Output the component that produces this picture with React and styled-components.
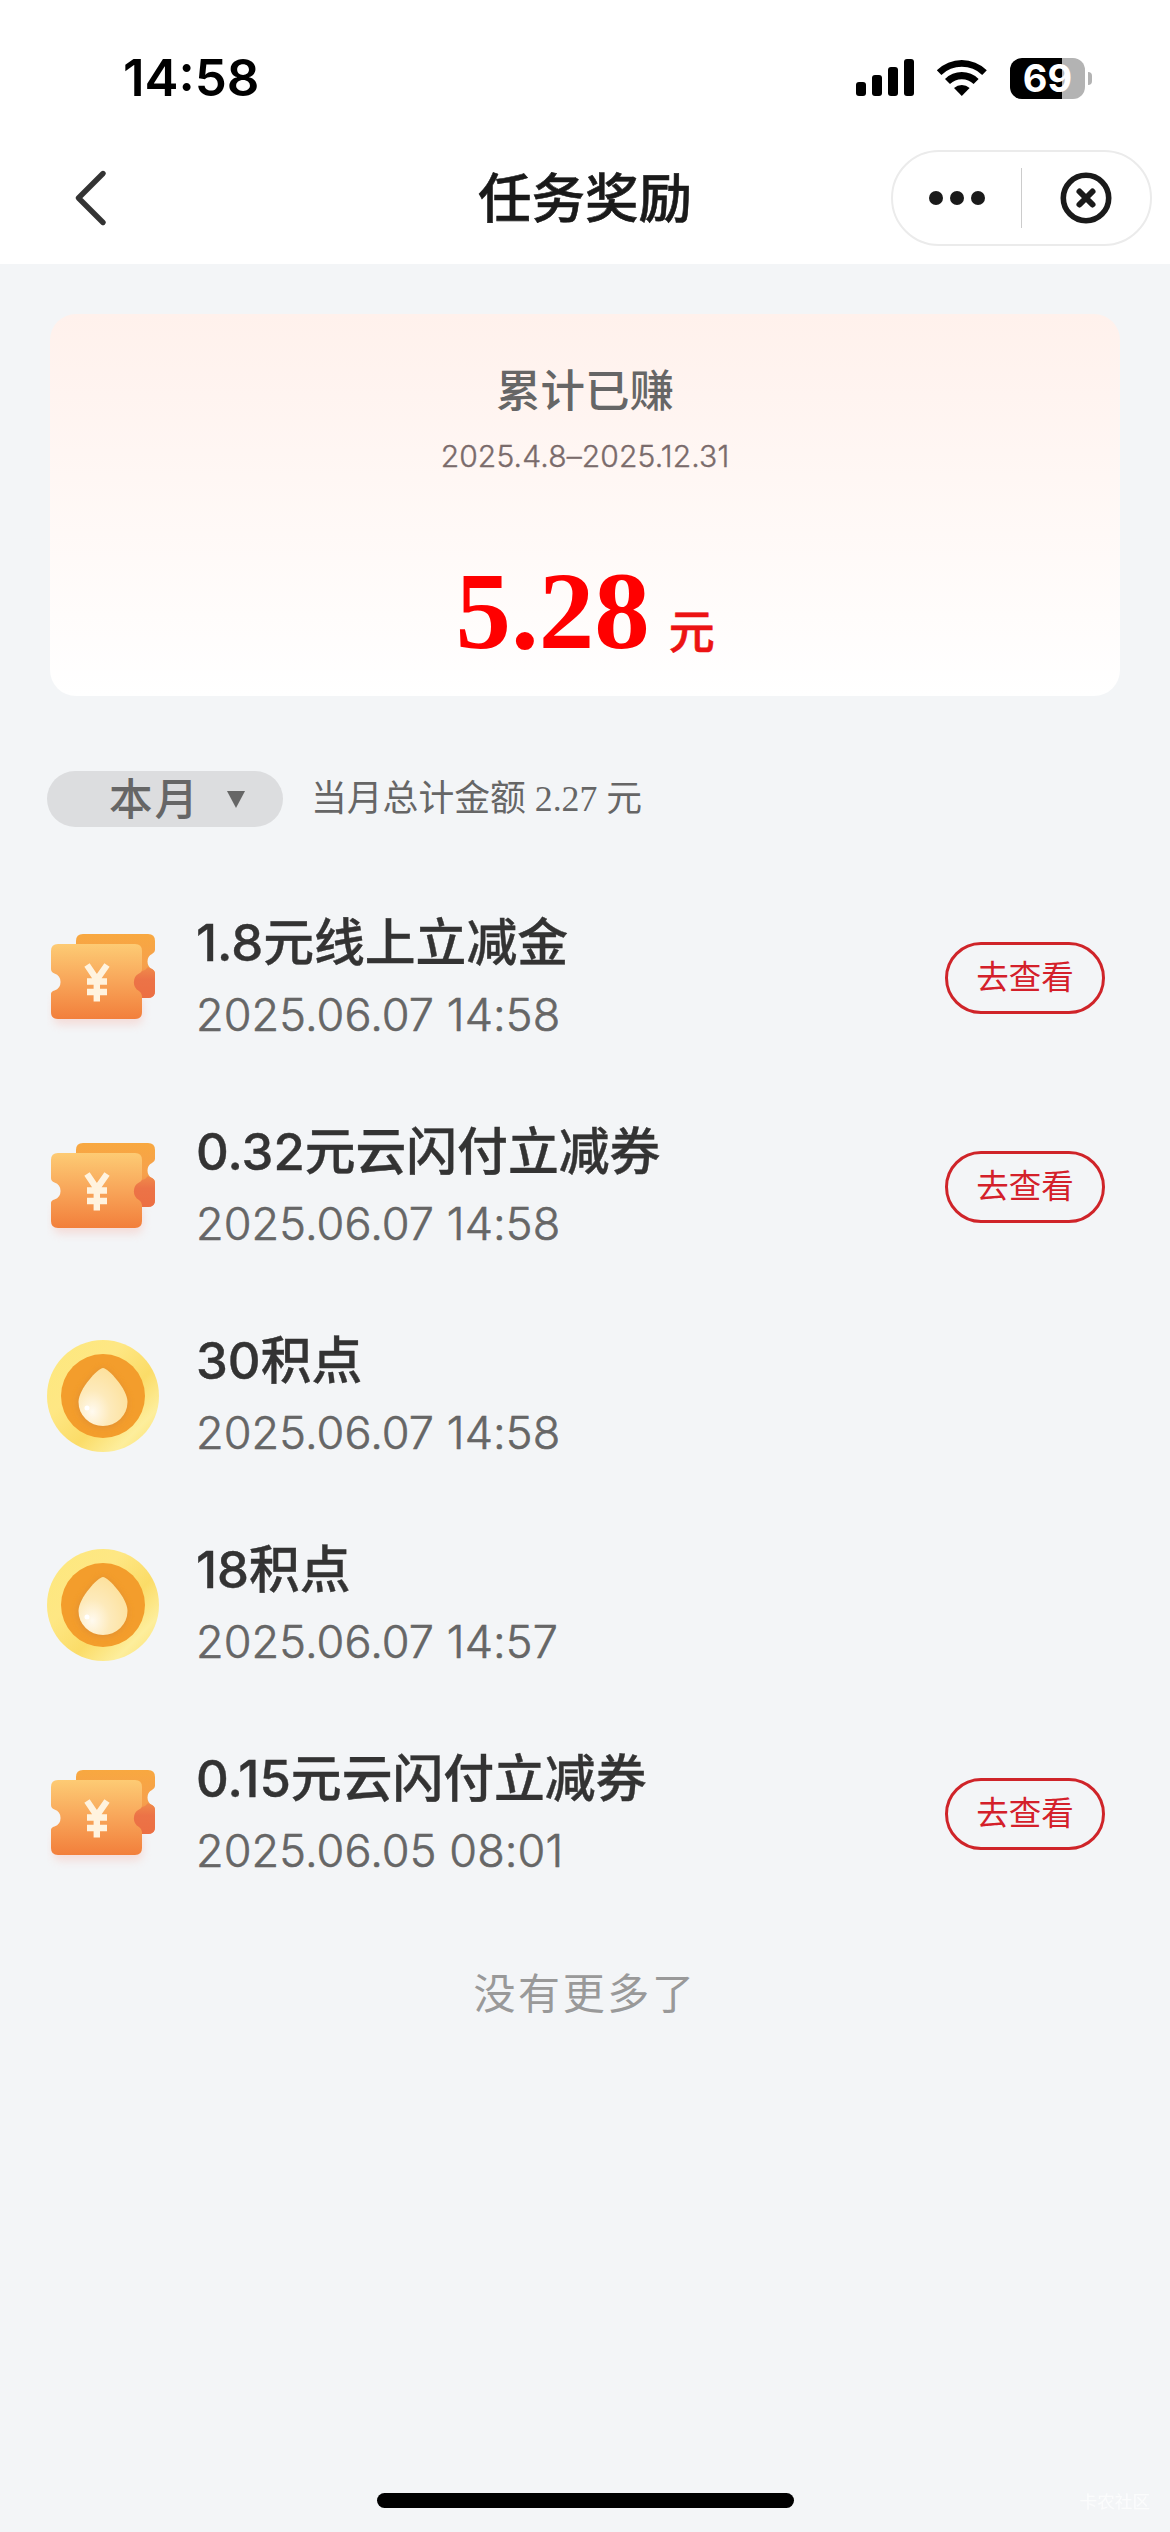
import React from 'react';
import styled, { createGlobalStyle } from 'styled-components';

const records = [
  { id: 1, type: 'coupon', title: '1.8元线上立减金', time: '2025.06.07 14:58' },
  { id: 2, type: 'coupon', title: '0.32元云闪付立减券', time: '2025.06.07 14:58' },
  { id: 3, type: 'point', title: '30积点', time: '2025.06.07 14:58' },
  { id: 4, type: 'point', title: '18积点', time: '2025.06.07 14:57' },
  { id: 5, type: 'coupon', title: '0.15元云闪付立减券', time: '2025.06.05 08:01' },
];

const SignalIcon = () => (
  <svg width="58" height="38" viewBox="0 0 58 38">
    <rect x="0" y="23" width="10" height="14" rx="3" />
    <rect x="16" y="16" width="10" height="21" rx="3" />
    <rect x="32" y="8" width="10" height="29" rx="3" />
    <rect x="48" y="0" width="10" height="37" rx="3" />
  </svg>
);

const WifiIcon = () => (
  <svg width="52" height="38" viewBox="0 0 52 38">
    <path d="M0.8 11.2 A36 36 0 0 1 50.8 11.2 L46.2 15.9 A29.4 29.4 0 0 0 5.4 15.9 Z" />
    <path d="M9 19.9 A24 24 0 0 1 42.6 19.9 L37.6 24.9 A17 17 0 0 0 14 24.9 Z" />
    <path d="M18 29 A12 12 0 0 1 33.6 29 L25.8 37 Z" />
  </svg>
);

const BackIcon = () => (
  <svg width="40" height="60" viewBox="0 0 40 60" fill="none">
    <path d="M33 5.5 L8.5 30 L33 54.5" stroke="#333" strokeWidth="5.4" strokeLinecap="round" strokeLinejoin="round" />
  </svg>
);

const MoreIcon = () => (
  <svg width="58" height="16" viewBox="0 0 58 16" fill="#1a1a1a">
    <circle cx="8" cy="8" r="7" />
    <circle cx="29" cy="8" r="7" />
    <circle cx="50" cy="8" r="7" />
  </svg>
);

const CloseIcon = () => (
  <svg width="52" height="52" viewBox="0 0 52 52" fill="none" stroke="#1a1a1a" strokeLinecap="round">
    <circle cx="26" cy="26" r="22.7" strokeWidth="5.6" />
    <path d="M19.5 19.5 L32.5 32.5 M32.5 19.5 L19.5 32.5" strokeWidth="6" />
  </svg>
);

const CouponIcon = () => (
  <svg width="112" height="112" viewBox="0 8 112 112">
    <defs>
      <linearGradient id="ticketBack" x1="0" y1="0" x2="0" y2="1">
        <stop offset="0" stopColor="#f8a840" />
        <stop offset="0.5" stopColor="#f6a04c" />
        <stop offset="1" stopColor="#ee7044" />
      </linearGradient>
      <linearGradient id="ticketStub" x1="0" y1="0" x2="0" y2="1">
        <stop offset="0" stopColor="#f08a4a" />
        <stop offset="0.4" stopColor="#ec7347" />
        <stop offset="1" stopColor="#ec6f43" />
      </linearGradient>
      <linearGradient id="ticketFront" x1="0" y1="0" x2="0" y2="1">
        <stop offset="0" stopColor="#fdcb74" />
        <stop offset="0.5" stopColor="#f8a559" />
        <stop offset="1" stopColor="#f27f3b" />
      </linearGradient>
      <filter id="ticketShadow" x="-20%" y="-50%" width="140%" height="200%">
        <feGaussianBlur stdDeviation="4" />
      </filter>
    </defs>
    <rect x="6" y="82" width="90" height="29" rx="8" fill="#f5b9ae" opacity="0.4" filter="url(#ticketShadow)" />
    <path
      d="M36 20 H101 Q108 20 108 27 V36 Q108 38.500 105 40 A8.500 8.500 0 0 0 105 55 Q108 56.500 108 60 V77 Q108 84 101 84 H29 V27 Q29 20 36 20 Z"
      fill="url(#ticketBack)"
    />
    <path d="M95 57 Q99 56 101 53 Q103 54.500 105 55 Q108 56.500 108 60 V77 Q108 84 101 84 H84 V62 Z" fill="url(#ticketStub)" />
    <path
      d="M11 30 H88 Q95 30 95 37 V55 Q95 58 92 59.500 A10 10 0 0 0 92 77 Q95 79 95 82 V98 Q95 105 88 105 H11 Q4 105 4 98 V80 Q4 77.500 7.500 76.500 A9 9 0 0 0 7.500 59.500 Q4 58 4 55 V37 Q4 30 11 30 Z"
      fill="url(#ticketFront)"
    />
    <path d="M40 51 L49.800 65.500 L60 51 M49.800 65 V87.500 M40 67.500 H60 M40 78 H60" stroke="#fff3df" strokeWidth="6.4" fill="none" />
  </svg>
);

const PointIcon = () => (
  <svg width="112" height="112" viewBox="0 0 112 112">
    <defs>
      <linearGradient id="coinRim" x1="0" y1="0" x2="1" y2="1">
        <stop offset="0" stopColor="#fde87d" />
        <stop offset="0.35" stopColor="#fee784" />
        <stop offset="0.6" stopColor="#fbdc68" />
        <stop offset="0.8" stopColor="#fdee9c" />
        <stop offset="1" stopColor="#fcdd66" />
      </linearGradient>
      <radialGradient id="coinDrop" cx="0.28" cy="0.75" r="0.8">
        <stop offset="0" stopColor="#fffaf0" />
        <stop offset="0.45" stopColor="#fdeabb" />
        <stop offset="1" stopColor="#fde19c" />
      </radialGradient>
      <filter id="dropGlow" x="-30%" y="-30%" width="160%" height="160%">
        <feGaussianBlur stdDeviation="3.5" />
      </filter>
    </defs>
    <circle cx="56" cy="56" r="56" fill="url(#coinRim)" />
    <circle cx="56" cy="56" r="42" fill="#f39d2c" />
    <path d="M56 29 C61 29 80 50 80 63 A24.500 24 0 0 1 31 63 C31 50 51 29 56 29 Z" fill="#d98a35" opacity="0.8" filter="url(#dropGlow)" />
    <path d="M56 28 C61 28 80.500 49 80.500 62 A24.500 24 0 0 1 31.500 62 C31.500 49 51 28 56 28 Z" fill="url(#coinDrop)" />
    <circle cx="40" cy="68" r="2.500" fill="#fff" />
  </svg>
);

const App = () => (
  <Screen>
    <GlobalStyle />
    <StatusBar>
      <Clock>14:58</Clock>
      <StatusIcons>
        <SignalIcon />
        <WifiIcon />
        <Battery>
          <BatteryBody>69</BatteryBody>
          <BatteryCap />
        </Battery>
      </StatusIcons>
    </StatusBar>

    <NavBar>
      <BackButton aria-label="返回"><BackIcon /></BackButton>
      <NavTitle>任务奖励</NavTitle>
      <Capsule>
        <CapsuleButton><MoreIcon /></CapsuleButton>
        <CapsuleDivider />
        <CapsuleButton><CloseIcon /></CapsuleButton>
      </Capsule>
    </NavBar>

    <Summary>
      <SummaryTitle>累计已赚</SummaryTitle>
      <SummaryRange>2025.4.8–2025.12.31</SummaryRange>
      <SummaryAmount>
        <Amount>5.28</Amount>
        <Unit>元</Unit>
      </SummaryAmount>
    </Summary>

    <FilterBar>
      <MonthSelect>
        本月
        <Caret viewBox="0 0 18 17"><path d="M0 0 H18 L9 17 Z" fill="#666" /></Caret>
      </MonthSelect>
      <MonthTotal>当月总计金额 2.27 元</MonthTotal>
    </FilterBar>

    <RecordList>
      {records.map(({ id, type, title, time }) => (
        <Record key={id}>
          {type === 'coupon' ? <CouponIcon /> : <PointIcon />}
          <RecordInfo>
            <RecordTitle>{title}</RecordTitle>
            <RecordTime>{time}</RecordTime>
          </RecordInfo>
          {type === 'coupon' && <ViewButton>去查看</ViewButton>}
        </Record>
      ))}
    </RecordList>

    <NoMore>没有更多了</NoMore>

    <Footer>
      <HomeIndicator />
      <Watermark>卡农社区</Watermark>
    </Footer>
  </Screen>
);

const GlobalStyle = createGlobalStyle`
  * {
    box-sizing: border-box;
  }

  body {
    margin: 0;
    background: #f3f5f7;
    font-family: Inter, "Noto Sans CJK SC", sans-serif;
  }

  svg {
    display: block;
    flex-shrink: 0;
  }

  button {
    margin: 0;
    padding: 0;
    border: 0;
    background: none;
    font-family: inherit;
  }
`;

const Screen = styled.div`
  display: flex;
  flex-direction: column;
  position: relative;
  width: 1170px;
  height: 2532px;
  overflow: hidden;
`;

const StatusBar = styled.header`
  display: flex;
  justify-content: space-between;
  height: 132px;
  padding: 57px 78px 0 123px;
  background: #fff;
`;

const Clock = styled.div`
  height: 42px;
  line-height: 42px;
  font-size: 51px;
  font-weight: 600;
`;

const StatusIcons = styled.div`
  display: flex;
  align-items: center;
  gap: 22px;
  height: 42px;
`;

const Battery = styled.div`
  display: flex;
  align-items: center;
  gap: 3px;
`;

const BatteryBody = styled.div`
  width: 75px;
  height: 41px;
  border-radius: 12px;
  background: linear-gradient(to right, #000 52px, #b3b3b3 52px);
  color: #fff;
  font-size: 38px;
  font-weight: 700;
  line-height: 41px;
  text-align: center;
`;

const BatteryCap = styled.div`
  width: 4px;
  height: 13px;
  border-radius: 0 4px 4px 0;
  background: #b3b3b3;
`;

const NavBar = styled.nav`
  display: grid;
  grid-template-columns: 1fr auto 1fr;
  align-items: center;
  height: 132px;
  padding: 0 18px 0 70px;
  background: #fff;
`;

const BackButton = styled.button`
  justify-self: start;
`;

const NavTitle = styled.h1`
  width: 214px;
  margin: 2px 52px 0 0;
  color: #1a1a1a;
  font-size: 53.5px;
  font-weight: 500;
  line-height: 64px;
  white-space: nowrap;
  -webkit-text-stroke: 0.6px currentColor;
`;

const Capsule = styled.div`
  display: flex;
  align-items: center;
  justify-self: end;
  width: 261px;
  height: 96px;
  border: 2px solid #ebebeb;
  border-radius: 48px;
`;

const CapsuleButton = styled.button`
  display: flex;
  flex: 1;
  justify-content: center;
`;

const CapsuleDivider = styled.i`
  width: 1px;
  height: 60px;
  background: #ccc;
`;

const Summary = styled.section`
  display: flex;
  flex-direction: column;
  align-items: center;
  height: 382px;
  margin: 50px 50px 0;
  padding-top: 47px;
  border-radius: 26px;
  background: linear-gradient(#fff1ec, #fff);
`;

const SummaryTitle = styled.h2`
  margin: 0;
  color: #666;
  font-size: 44.5px;
  font-weight: 500;
  line-height: 61px;
`;

const SummaryRange = styled.div`
  margin-top: 14px;
  color: #7a6b6b;
  font-size: 30px;
  font-weight: 300;
  letter-spacing: 0.15px;
  line-height: 40px;
  -webkit-text-stroke: 0.4px currentColor;
`;

const SummaryAmount = styled.div`
  display: flex;
  align-items: baseline;
  margin-top: 74px;
`;

const Amount = styled.strong`
  color: #f00;
  font-family: "Liberation Serif", serif;
  font-size: 111px;
  line-height: 122px;
`;

const Unit = styled.span`
  margin-left: 19px;
  color: #ec1313;
  font-size: 46px;
  font-weight: 500;
  line-height: 60px;
  -webkit-text-stroke: 0.6px currentColor;
`;

const FilterBar = styled.div`
  display: flex;
  align-items: center;
  margin-top: 75px;
  padding-left: 47px;
`;

const MonthSelect = styled.button`
  display: flex;
  align-items: center;
  width: 236px;
  height: 56px;
  padding-left: 62px;
  border-radius: 28px;
  background: #dcdddf;
  color: #666;
  font-size: 43.5px;
  font-weight: 500;
  letter-spacing: 2px;
  line-height: 54px;
`;

const Caret = styled.svg`
  width: 18px;
  height: 17px;
  margin-left: 27px;
`;

const MonthTotal = styled.div`
  margin-left: 28px;
  color: #666;
  font-family: "Liberation Serif", "Noto Sans CJK SC", serif;
  font-size: 35.8px;
  line-height: 56px;
`;

const RecordList = styled.ul`
  margin: 46px 0 0;
  padding: 0 65px 0 47px;
  list-style: none;
`;

const Record = styled.li`
  display: flex;
  align-items: center;
  height: 209px;
`;

const RecordInfo = styled.div`
  flex: 1;
  margin-left: 37px;
  padding-top: 3px;
`;

const RecordTitle = styled.div`
  color: #333;
  font-size: 50.8px;
  font-weight: 500;
  line-height: 72px;
  -webkit-text-stroke: 0.4px currentColor;
`;

const RecordTime = styled.div`
  color: #666;
  font-size: 45px;
  font-weight: 300;
  letter-spacing: 0.1px;
  line-height: 72px;
  -webkit-text-stroke: 0.6px currentColor;
`;

const ViewButton = styled.button`
  width: 160px;
  height: 72px;
  border: 3px solid #cf2429;
  border-radius: 36px;
  color: #d4202a;
  font-size: 32.5px;
  line-height: 66px;
`;

const NoMore = styled.div`
  margin-top: 46px;
  color: #999;
  font-size: 42px;
  letter-spacing: 2.6px;
  line-height: 60px;
  text-align: center;
`;

const Footer = styled.footer`
  display: flex;
  justify-content: center;
  margin-top: auto;
  padding-bottom: 24px;
`;

const HomeIndicator = styled.div`
  width: 417px;
  height: 15px;
  border-radius: 8px;
  background: #000;
`;

const Watermark = styled.span`
  position: absolute;
  right: 20px;
  bottom: 18px;
  color: #fff;
  font-size: 17.6px;
  line-height: 24px;
  opacity: 0.7;
`;

export default App;
